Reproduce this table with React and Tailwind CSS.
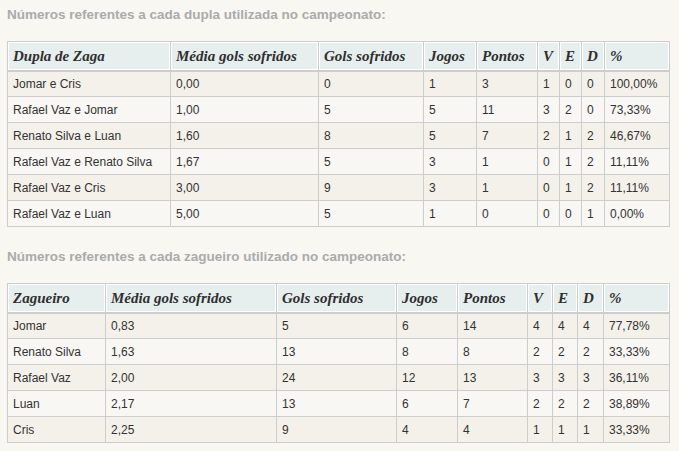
import React from 'react'

const duplas = {
  head: ['Dupla de Zaga', 'Média gols sofridos', 'Gols sofridos', 'Jogos', 'Pontos', 'V', 'E', 'D', '%'],
  widths: [163, 148, 105, 53, 61, 22, 22, 23, 65],
  rows: [
    ['Jomar e Cris', '0,00', '0', '1', '3', '1', '0', '0', '100,00%'],
    ['Rafael Vaz e Jomar', '1,00', '5', '5', '11', '3', '2', '0', '73,33%'],
    ['Renato Silva e Luan', '1,60', '8', '5', '7', '2', '1', '2', '46,67%'],
    ['Rafael Vaz e Renato Silva', '1,67', '5', '3', '1', '0', '1', '2', '11,11%'],
    ['Rafael Vaz e Cris', '3,00', '9', '3', '1', '0', '1', '2', '11,11%'],
    ['Rafael Vaz e Luan', '5,00', '5', '1', '0', '0', '0', '1', '0,00%'],
  ],
}

const zagueiros = {
  head: ['Zagueiro', 'Média gols sofridos', 'Gols sofridos', 'Jogos', 'Pontos', 'V', 'E', 'D', '%'],
  widths: [98, 171, 120, 61, 70, 25, 25, 26, 66],
  rows: [
    ['Jomar', '0,83', '5', '6', '14', '4', '4', '4', '77,78%'],
    ['Renato Silva', '1,63', '13', '8', '8', '2', '2', '2', '33,33%'],
    ['Rafael Vaz', '2,00', '24', '12', '13', '3', '3', '3', '36,11%'],
    ['Luan', '2,17', '13', '6', '7', '2', '2', '2', '38,89%'],
    ['Cris', '2,25', '9', '4', '4', '1', '1', '1', '33,33%'],
  ],
}

const StatsTable = ({ data }) => (
  <table className="table-fixed border-collapse border border-[#cdcdcd] w-[662px]">
    <colgroup>
      {data.widths.map((w, i) => (
        <col key={i} style={{ width: w }} />
      ))}
    </colgroup>
    <thead>
      <tr className="h-[29px]">
        {data.head.map((h) => (
          <th
            key={h}
            className="bg-[#e6eeee] border border-[#cdcdcd] border-b-2 shadow-[inset_0_0_0_1px_#fff] text-left pl-[5px] pr-1 font-bold italic text-[15px] text-[#2f2f2f] whitespace-nowrap font-['Liberation_Serif',serif]"
          >
            {h}
          </th>
        ))}
      </tr>
    </thead>
    <tbody>
      {data.rows.map((r, i) => (
        <tr key={i} className={i % 2 === 0 ? 'h-[26px] bg-[#f3f1ea]' : 'h-[26px] bg-[#f8f7f3]'}>
          {r.map((c, j) => (
            <td key={j} className="border border-[#cdcdcd] pl-[5px] pr-1 text-[12px] text-[#333] whitespace-nowrap">
              {c}
            </td>
          ))}
        </tr>
      ))}
    </tbody>
  </table>
)

export default function App() {
  return (
    <div className="min-h-screen w-[679px] h-[451px] overflow-hidden bg-[#f8f7f2] font-['Liberation_Sans',Arial,sans-serif] px-[7px]">
      <h3 className="pt-[5px] h-[41px] text-[13.5px] font-bold text-[#ababab]">
        Números referentes a cada dupla utilizada no campeonato:
      </h3>
      <StatsTable data={duplas} />
      <h3 className="pt-[20px] h-[56px] text-[13.5px] font-bold text-[#ababab]">
        Números referentes a cada zagueiro utilizado no campeonato:
      </h3>
      <StatsTable data={zagueiros} />
    </div>
  )
}
